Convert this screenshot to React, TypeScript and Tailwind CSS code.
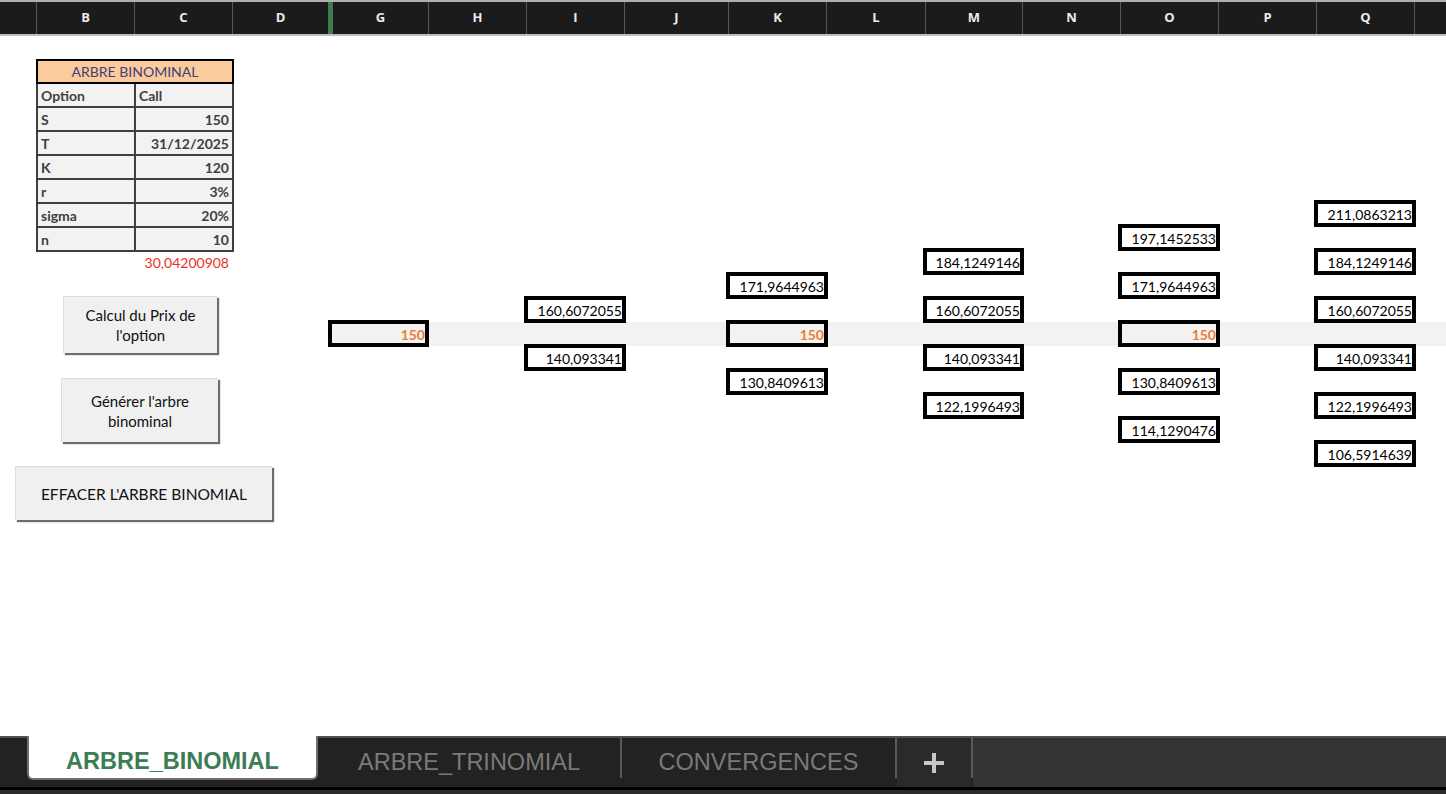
import React from "react";

const COLS =
  "grid-cols-[37px_98px_98px_95px_5px_96px_98px_98px_104px_98px_99px_97px_98px_98px_98px_98px_1fr]";

const headerLabels = ["", "B", "C", "D", "#", "G", "H", "I", "J", "K", "L", "M", "N", "O", "P", "Q", ""];

const colMap: Record<number, string> = {
  6: "col-start-[6]",
  8: "col-start-[8]",
  10: "col-start-[10]",
  12: "col-start-[12]",
  14: "col-start-[14]",
  16: "col-start-[16]",
};

const rowMap: Record<number, string> = {
  8: "row-start-[8]",
  9: "row-start-[9]",
  10: "row-start-[10]",
  11: "row-start-[11]",
  12: "row-start-[12]",
  13: "row-start-[13]",
  14: "row-start-[14]",
  15: "row-start-[15]",
  16: "row-start-[16]",
  17: "row-start-[17]",
  18: "row-start-[18]",
};

type Node = { c: number; r: number; t: string; o?: boolean };

const nodes: Node[] = [
  { c: 6, r: 13, t: "150", o: true },
  { c: 8, r: 12, t: "160,6072055" },
  { c: 8, r: 14, t: "140,093341" },
  { c: 10, r: 11, t: "171,9644963" },
  { c: 10, r: 13, t: "150", o: true },
  { c: 10, r: 15, t: "130,8409613" },
  { c: 12, r: 10, t: "184,1249146" },
  { c: 12, r: 12, t: "160,6072055" },
  { c: 12, r: 14, t: "140,093341" },
  { c: 12, r: 16, t: "122,1996493" },
  { c: 14, r: 9, t: "197,1452533" },
  { c: 14, r: 11, t: "171,9644963" },
  { c: 14, r: 13, t: "150", o: true },
  { c: 14, r: 15, t: "130,8409613" },
  { c: 14, r: 17, t: "114,1290476" },
  { c: 16, r: 8, t: "211,0863213" },
  { c: 16, r: 10, t: "184,1249146" },
  { c: 16, r: 12, t: "160,6072055" },
  { c: 16, r: 14, t: "140,093341" },
  { c: 16, r: 16, t: "122,1996493" },
  { c: 16, r: 18, t: "106,5914639" },
];

const params: [string, string][] = [
  ["S", "150"],
  ["T", "31/12/2025"],
  ["K", "120"],
  ["r", "3%"],
  ["sigma", "20%"],
  ["n", "10"],
];

function Header() {
  return (
    <div
      className={`grid ${COLS} h-[36px] shrink-0 border-t-2 border-b-2 border-t-[#b0b0b0] border-b-[#bdbdbd] bg-[#1b1b1b] [font-family:'Open_Sans',sans-serif]`}
    >
      {headerLabels.map((l, i) =>
        l === "#" ? (
          <div key={i} className="bg-[#3d7b50]" />
        ) : (
          <div
            key={i}
            className={`flex items-center justify-center text-[13px] font-bold text-[#ececec] ${
              i === 3 || i === headerLabels.length - 1 ? "" : "border-r border-[#575757]"
            }`}
          >
            {l}
          </div>
        )
      )}
    </div>
  );
}

function ParamTable() {
  return (
    <div className="col-start-[2] row-start-[2] row-span-8 -ml-[1px] mt-[1px] w-[198px] self-start text-[14px] text-[#3f3f3f]">
      <div className="h-[25px] border-2 border-black bg-[#fbcb9e] flex items-center justify-center text-[#3f3f76]">
        ARBRE BINOMINAL
      </div>
      <div className="border-x-2 border-b-2 border-[#3f3f3f] bg-[#f2f2f2] font-bold">
        <div className="flex h-[24px] border-b-2 border-[#3f3f3f]">
          <div className="w-[98px] border-r-2 border-[#3f3f3f] pl-[3px] flex items-center pt-[1px]">Option</div>
          <div className="flex-1 pl-[3px] flex items-center pt-[1px]">Call</div>
        </div>
        {params.map(([k, v], i) => (
          <div
            key={k}
            className={`flex ${i === params.length - 1 ? "h-[22px]" : "h-[24px] border-b-2 border-[#3f3f3f]"}`}
          >
            <div className="w-[98px] border-r-2 border-[#3f3f3f] pl-[3px] flex items-center pt-[1px]">{k}</div>
            <div className="flex-1 pr-[3px] flex items-center justify-end pt-[1px]">{v}</div>
          </div>
        ))}
      </div>
    </div>
  );
}

function XButton({ className, children }: { className: string; children: React.ReactNode }) {
  return (
    <div
      className={`flex items-center justify-center text-center leading-[20px] text-[#111] bg-[#f0f0f0] border-t border-l border-[#dcdcdc] shadow-[2px_2px_1px_#6e6e6e] ${className}`}
    >
      {children}
    </div>
  );
}

function Body() {
  return (
    <div className={`grid ${COLS} grid-rows-[22px_repeat(28,24px)] flex-1 overflow-hidden`}>
      <ParamTable />
      <div className="col-start-[3] row-start-[10] flex items-center justify-end pr-[4px] pt-[1px] text-[14px] text-[#ec2f27]">
        30,04200908
      </div>

      <div className="col-start-[1] col-span-5 row-start-[11] row-span-11 flex flex-col items-start pt-[22px] self-start">
        <XButton className="ml-[63px] w-[154px] h-[57px] text-[15px]">
          Calcul du Prix de
          <br />
          l'option
        </XButton>
        <XButton className="ml-[61px] mt-[25px] w-[157px] h-[64px] text-[15px]">
          Générer l'arbre
          <br />
          binominal
        </XButton>
        <XButton className="ml-[15px] mt-[24px] w-[257px] h-[54px] text-[15.5px]">EFFACER L'ARBRE BINOMIAL</XButton>
      </div>

      <div className="col-start-[6] col-end-[18] row-start-[13] bg-[#f2f2f2]" />

      {nodes.map((n, i) => (
        <div
          key={i}
          className={`${colMap[n.c]} ${rowMap[n.r]} ${
            n.c === 6 ? "-ml-[5px] mr-0" : "-ml-[3px] -mr-[1px]"
          } -mt-[2px] -mb-[1px] border-4 border-black flex items-center justify-end pr-0 pt-[2px] text-[14px] leading-none ${
            n.o ? "bg-[#f2f2f2] text-[#ed7d31] font-bold" : "bg-white text-black"
          }`}
        >
          {n.t}
        </div>
      ))}
    </div>
  );
}

function Tabs() {
  return (
    <div className="h-[58px] shrink-0 flex flex-col bg-[#222222] [font-family:'Liberation_Sans',Arial,sans-serif]">
      <div className="h-[2px] bg-[#505050]" />
      <div className="h-[49px] flex">
        <div className="w-[27px] bg-[#222222]" />
        <div className="w-[291px] h-[44px] -mt-[2px] bg-white border-x-2 border-b-2 border-[#6e6e6e] rounded-b-[6px] flex items-center justify-center pt-[10px] text-[23.5px] font-bold text-[#3c7d55]">
          ARBRE_BINOMIAL
        </div>
        <div className="w-[302px] flex items-center justify-center text-[23.5px] text-[#7a7a7a]">
          ARBRE_TRINOMIAL
        </div>
        <div className="w-[2px] h-[40px] bg-[#5a5a5a]" />
        <div className="w-[273px] flex items-center justify-center text-[23.5px] text-[#7a7a7a]">
          CONVERGENCES
        </div>
        <div className="w-[2px] h-[40px] bg-[#5a5a5a]" />
        <div className="w-[74px] bg-[#2a2a2a] flex items-center justify-center">
          <svg width="20" height="20" viewBox="0 0 20 20">
            <rect x="8" y="0" width="4" height="20" fill="#c6c6c6" />
            <rect x="0" y="8" width="20" height="4" fill="#c6c6c6" />
          </svg>
        </div>
        <div className="w-[2px] h-[40px] bg-[#5a5a5a]" />
        <div className="flex-1 bg-[#333333]" />
      </div>
      <div className="h-[3px] bg-black" />
      <div className="h-[4px] bg-[#2b2b2b]" />
    </div>
  );
}

export default function App() {
  return (
    <div className="w-[1446px] h-[794px] flex flex-col overflow-hidden bg-white [font-family:Lato,sans-serif]">
      <Header />
      <Body />
      <Tabs />
    </div>
  );
}
